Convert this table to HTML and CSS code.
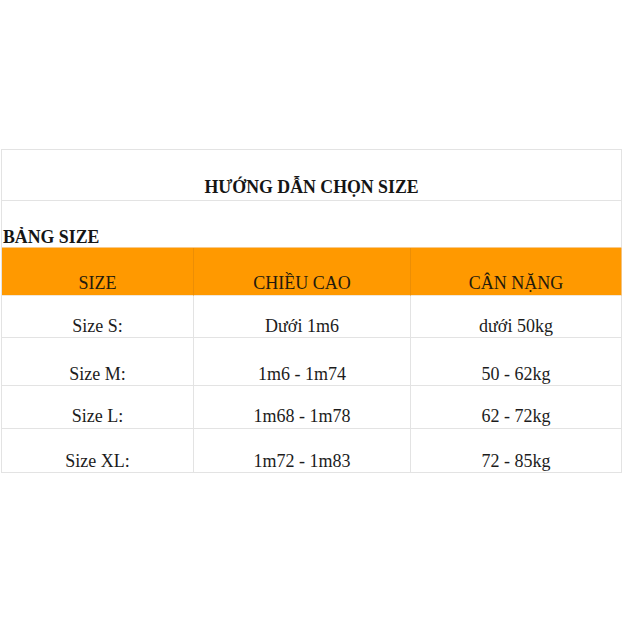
FILE: index.html
```html
<!DOCTYPE html>
<html lang="vi">
<head>
<meta charset="utf-8">
<title>Hướng dẫn chọn size</title>
<link rel="stylesheet" href="styles.css">
</head>
<body>
<div class="sheet">
  <div class="cell span title">HƯỚNG DẪN CHỌN SIZE</div>
  <div class="cell span label">BẢNG SIZE</div>
  <div class="cell head">SIZE</div>
  <div class="cell head">CHIỀU CAO</div>
  <div class="cell head last">CÂN NẶNG</div>

  <div class="cell r1">Size S:</div>
  <div class="cell r1">Dưới 1m6</div>
  <div class="cell r1 last">dưới 50kg</div>

  <div class="cell r2">Size M:</div>
  <div class="cell r2">1m6 - 1m74</div>
  <div class="cell r2 last">50 - 62kg</div>

  <div class="cell r3">Size L:</div>
  <div class="cell r3">1m68 - 1m78</div>
  <div class="cell r3 last">62 - 72kg</div>

  <div class="cell r4">Size XL:</div>
  <div class="cell r4">1m72 - 1m83</div>
  <div class="cell r4 last">72 - 85kg</div>
</div>
</body>
</html>
```
FILE: styles.css
```css
html, body {
  margin: 0;
  padding: 0;
  background: #ffffff;
}

body {
  font-family: "Liberation Serif", "Times New Roman", serif;
  color: #1c1c1c;
}

.sheet {
  margin: 149px 0 0 1px;
  width: 620px;
  display: grid;
  grid-template-columns: 192px 217px 211px;
  grid-template-rows: 51px 47px 48px 42px 48px 43px 44px;
  border-top: 1px solid #e3e3e3;
  border-left: 1px solid #e3e3e3;
  box-sizing: content-box;
}

.cell {
  box-sizing: border-box;
  border-right: 1px solid #e3e3e3;
  border-bottom: 1px solid #e3e3e3;
  display: flex;
  align-items: flex-end;
  justify-content: center;
  font-size: 18px;
  line-height: 18px;
  padding-bottom: 2px;
  white-space: nowrap;
}

.span {
  grid-column: 1 / 4;
}

.title {
  font-weight: bold;
  font-size: 17.8px;
  padding-bottom: 4px;
  color: #151515;
}

.label {
  justify-content: flex-start;
  font-weight: bold;
  font-size: 17.8px;
  padding-left: 1px;
  padding-bottom: 1px;
  color: #151515;
  border-bottom-color: #f8c98a;
}

.head {
  background: #ff9900;
  font-size: 18px;
  padding-bottom: 3px;
  color: #241a0c;
  border-right-color: #ec8e05;
  border-bottom-color: #f1e7d8;
}

.head.last {
  border-right-color: #f3c27e;
}

.r3 {
  padding-bottom: 3px;
}
```
